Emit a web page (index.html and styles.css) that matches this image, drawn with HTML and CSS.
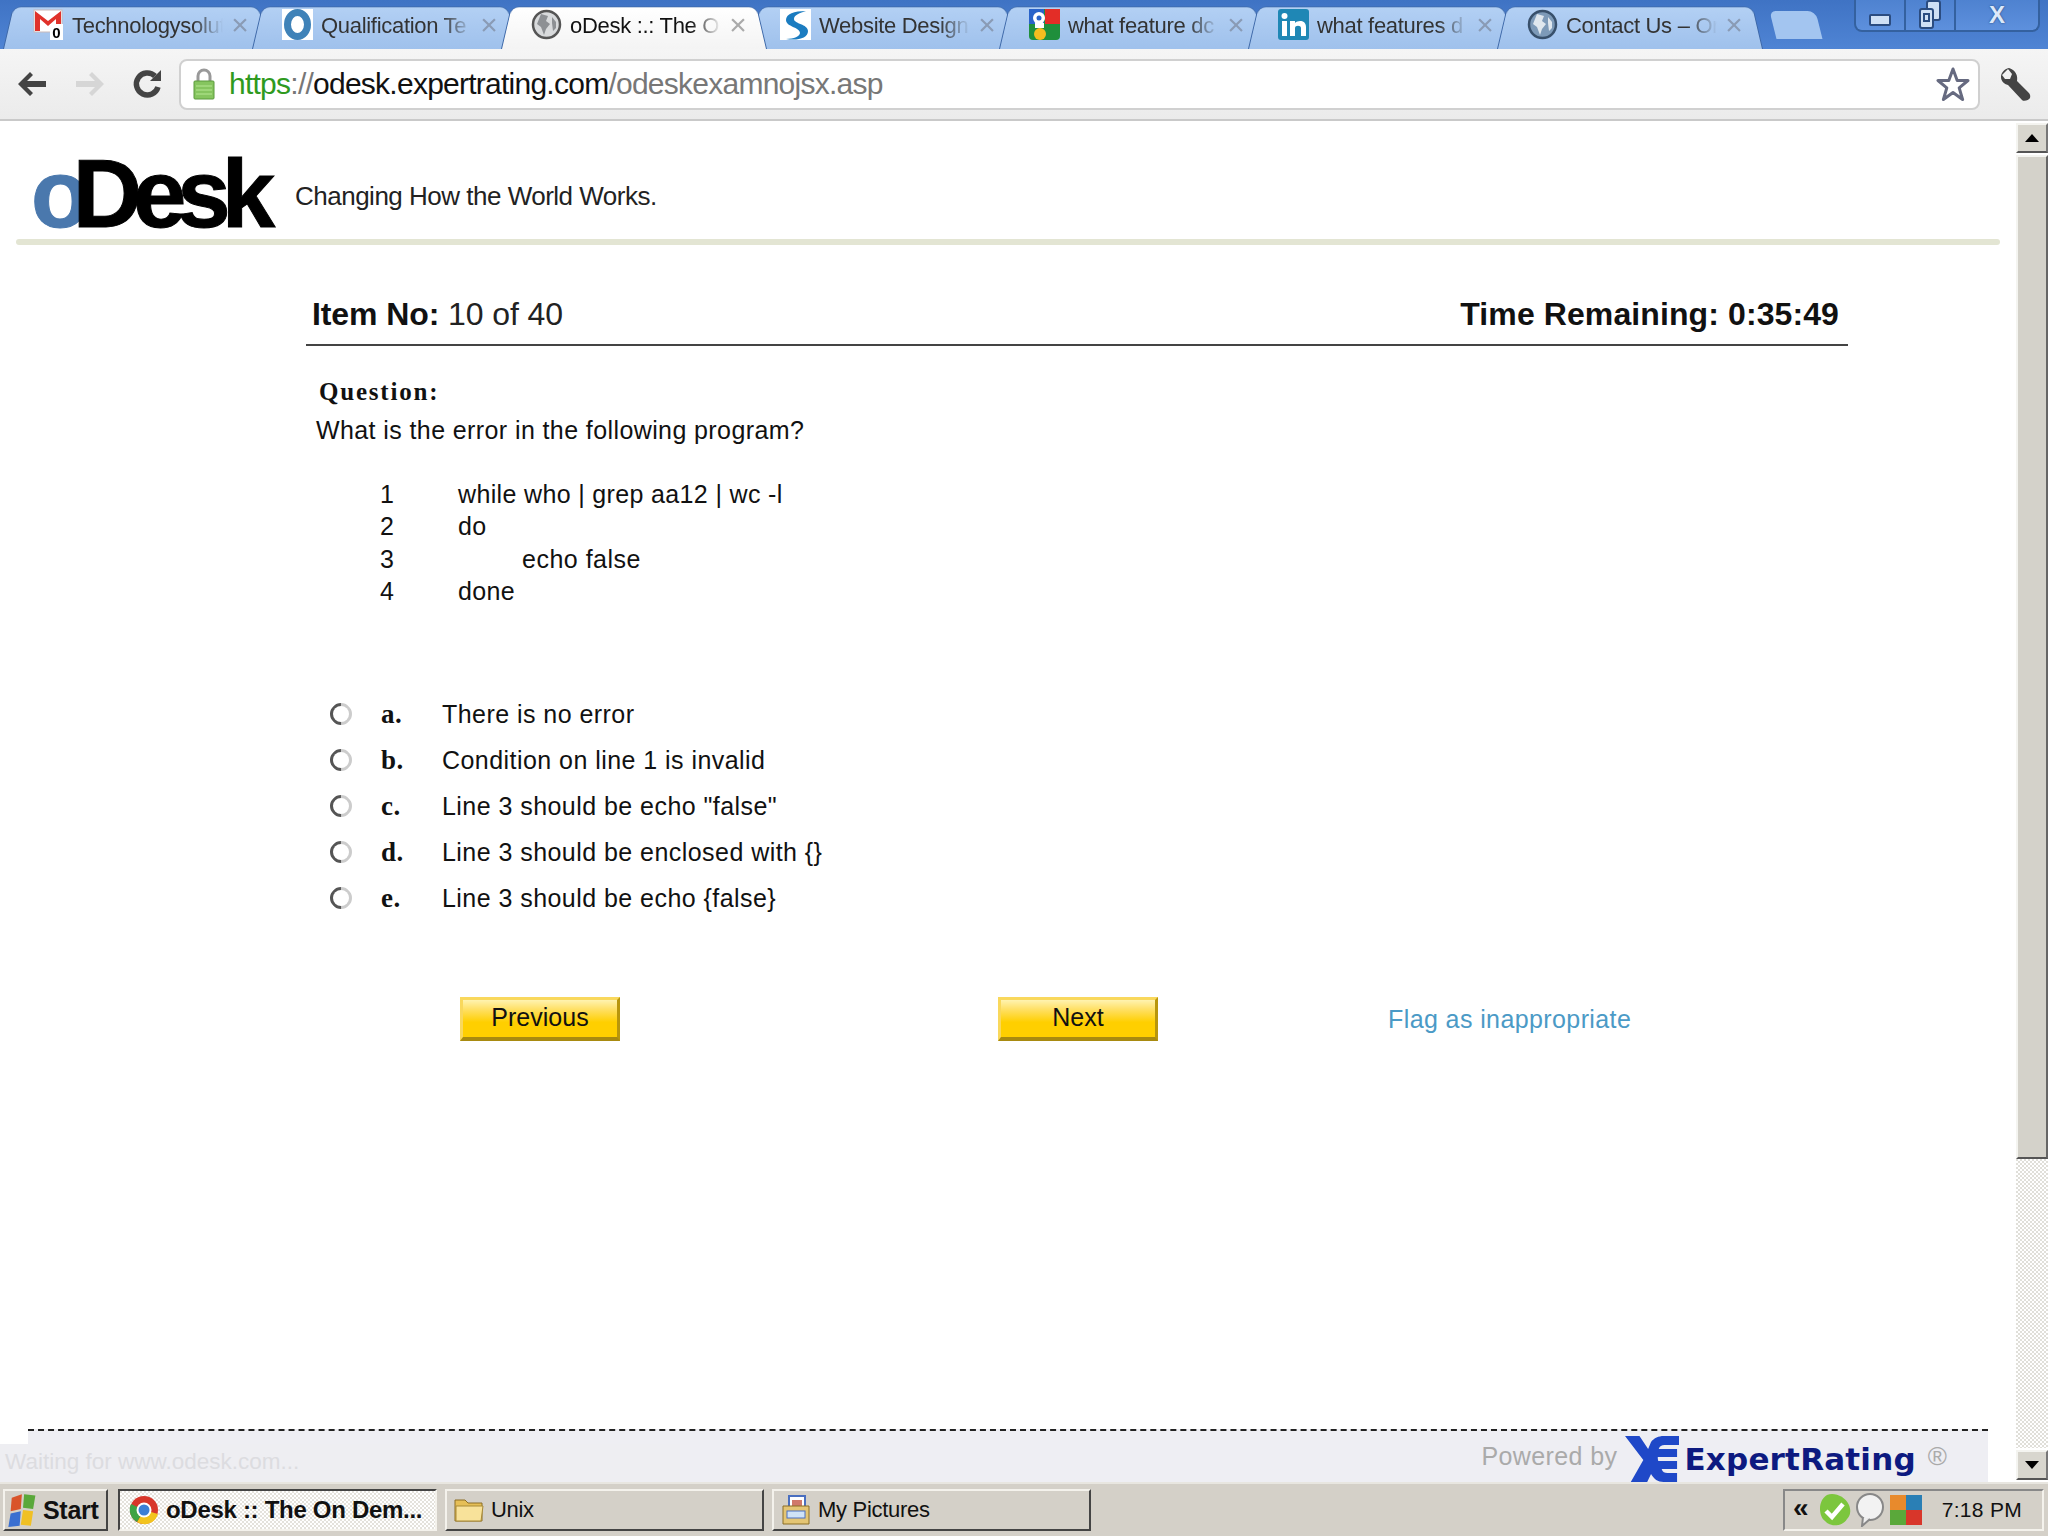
FILE: index.html
```html
<!DOCTYPE html>
<html lang="en">
<head>
<meta charset="utf-8">
<title>oDesk :: The On Demand Global Workforce</title>
<link rel="stylesheet" href="styles.css">
</head>
<body>
<div class="screen">
  <header class="tabstrip">
    <div class="tabs">
      <div class="tab">
        <svg class="favicon" viewBox="0 0 31 31"><rect x="1" y="1" width="28" height="22" fill="#fff" stroke="#c9b9b9"/><path d="M2 2v20h5V10l8 7 8-7v12h5V2l-13 10z" fill="#e0312a"/><rect x="17" y="15" width="13" height="16" fill="#fff"/><text x="23.5" y="29" class="badge">0</text></svg>
        <span class="tab-title">Technologysolut</span><span class="tab-close">×</span>
      </div>
      <div class="tab">
        <svg class="favicon" viewBox="0 0 31 31"><rect width="31" height="31" fill="#fff"/><ellipse cx="15.5" cy="15.5" rx="10" ry="12" fill="none" stroke="#3f82b8" stroke-width="7"/></svg>
        <span class="tab-title">Qualification Te</span><span class="tab-close">×</span>
      </div>
      <div class="tab tab-active">
        <svg class="favicon" viewBox="0 0 31 31"><circle cx="15.5" cy="15.5" r="13.5" fill="#d8dadc" stroke="#555" stroke-width="2.5"/><path d="M10 5l7 2-2 5 4 3-4 5-2 6-3-8-4-3 2-5zM21 8l4 5v6l-3 3-1-8z" fill="#8d9094"/></svg>
        <span class="tab-title">oDesk :.: The O</span><span class="tab-close">×</span>
      </div>
      <div class="tab">
        <svg class="favicon" viewBox="0 0 31 31"><rect width="31" height="31" fill="#fff"/><path d="M26 2C14 2 6 5 6 11c0 7 14 7 14 13 0 3-6 6-14 6 12 2 22-1 22-8 0-7-14-7-14-12 0-4 6-6 12-8z" fill="#1b7cc0"/></svg>
        <span class="tab-title">Website Design,</span><span class="tab-close">×</span>
      </div>
      <div class="tab">
        <svg class="favicon" viewBox="0 0 31 31"><rect width="31" height="31" rx="4" fill="#1f8f3c"/><rect x="16" width="15" height="15" fill="#e32d27"/><rect width="15" height="15" fill="#2a63c9"/><circle cx="11" cy="25" r="6" fill="#f5bd1f"/><circle cx="10" cy="9" r="6" fill="#fff"/><circle cx="10" cy="9" r="2.5" fill="#2a63c9"/><rect x="6" y="14" width="9" height="5" fill="#fff"/></svg>
        <span class="tab-title">what feature dc</span><span class="tab-close">×</span>
      </div>
      <div class="tab">
        <svg class="favicon" viewBox="0 0 31 31"><rect width="31" height="31" rx="3" fill="#1f87b5"/><rect x="4" y="12" width="5" height="15" fill="#fff"/><circle cx="6.500" cy="7" r="3" fill="#fff"/><path d="M12 12h5v2c3-3 11-3 11 4v9h-5v-8c0-3-6-3-6 0v8h-5z" fill="#fff"/></svg>
        <span class="tab-title">what features d</span><span class="tab-close">×</span>
      </div>
      <div class="tab">
        <svg class="favicon" viewBox="0 0 31 31"><circle cx="15.5" cy="15.5" r="13.500" fill="#7d9ab8" stroke="#38506b" stroke-width="2.500"/><path d="M10 5l7 2-2 5 4 3-4 5-2 6-3-8-4-3 2-5zM21 8l4 5v6l-3 3-1-8z" fill="#dfe7ee"/></svg>
        <span class="tab-title">Contact Us – Or</span><span class="tab-close">×</span>
      </div>
      <div class="tab-new"></div>
    </div>
    <div class="winctl">
      <div class="winbtn winbtn-min"><span class="min-glyph"></span></div>
      <div class="winbtn winbtn-res">
        <svg class="res-glyph" viewBox="0 0 24 30"><rect x="9" y="1" width="13" height="19" rx="2" fill="#cfe0f5" stroke="#2b4c80" stroke-width="2"/><rect x="2" y="9" width="13" height="19" rx="2" fill="#cfe0f5" stroke="#2b4c80" stroke-width="2"/><rect x="6" y="14" width="5" height="7" fill="none" stroke="#2b4c80" stroke-width="2"/></svg>
      </div>
      <div class="winbtn winbtn-close">X</div>
    </div>
  </header>

  <nav class="toolbar">
    <svg class="nav-ico" viewBox="0 0 32 32"><path d="M2 16L14 4l3 3-6 6h19v6H11l6 6-3 3z" fill="#444"/></svg>
    <svg class="nav-ico" viewBox="0 0 32 32"><path d="M30 16L18 4l-3 3 6 6H2v6h19l-6 6 3 3z" fill="#d6d6d6"/></svg>
    <svg class="nav-ico" viewBox="0 0 32 32"><path d="M26 19a11 11 0 1 1-3-11" fill="none" stroke="#444" stroke-width="5.500"/><path d="M18 13h11V2z" fill="#444"/></svg>
    <div class="omnibox">
      <svg class="lock" viewBox="0 0 22 32"><path d="M5 14V8a6 6 0 0 1 12 0v6" fill="none" stroke="#999" stroke-width="3"/><rect x="1" y="13" width="20" height="18" rx="1" fill="#86c55f" stroke="#5a9a3c"/><path d="M3 18h16M3 22h16M3 26h16" stroke="#a7dc83" stroke-width="1.500"/></svg>
      <span class="url"><span class="url-scheme">https</span><span class="url-path">://</span><span class="url-host">odesk.expertrating.com</span><span class="url-path">/odeskexamnojsx.asp</span></span>
      <svg class="star" viewBox="0 0 34 36"><path d="M17 3l4.200 11.500H32l-8.800 7.300 3.400 11.700L17 26.500 7.400 33.500l3.400-11.700L2 14.500h10.800z" fill="#fff" stroke="#666a80" stroke-width="3" stroke-linejoin="round"/></svg>
    </div>
    <svg class="wrench" viewBox="0 0 34 36"><path d="M11 2c-5 1-8 5-8 9 0 4 3 7 7 8l14 15c2 2 7 0 8-2 1-3-1-5-2-6L19 15c1-5-1-11-8-13l-1 1 4 5-2 5-5 0-3-4" fill="#444"/></svg>
  </nav>

  <main class="viewport">
    <div class="page">
      <div class="brand">
        <div class="logo"><span class="logo-o">o</span><span class="logo-desk">Desk</span></div>
        <div class="tagline">Changing How the World Works.</div>
      </div>
      <div class="brand-rule"></div>

      <div class="exam">
        <div class="exam-head">
          <div class="item-no"><b>Item No:</b> 10 of 40</div>
          <div class="timer">Time Remaining: 0:35:49</div>
        </div>
        <div class="q-label">Question:</div>
        <div class="q-text">What is the error in the following program?</div>
        <div class="code">
          <div class="code-line"><span class="ln">1</span><span>while who | grep aa12 | wc -l</span></div>
          <div class="code-line"><span class="ln">2</span><span>do</span></div>
          <div class="code-line"><span class="ln">3</span><span class="indent">echo false</span></div>
          <div class="code-line"><span class="ln">4</span><span>done</span></div>
        </div>
        <div class="options">
          <div class="option"><span class="radio"></span><b class="opt-key">a.</b><span>There is no error</span></div>
          <div class="option"><span class="radio"></span><b class="opt-key">b.</b><span>Condition on line 1 is invalid</span></div>
          <div class="option"><span class="radio"></span><b class="opt-key">c.</b><span>Line 3 should be echo "false"</span></div>
          <div class="option"><span class="radio"></span><b class="opt-key">d.</b><span>Line 3 should be enclosed with {}</span></div>
          <div class="option"><span class="radio"></span><b class="opt-key">e.</b><span>Line 3 should be echo {false}</span></div>
        </div>
        <div class="actions">
          <button class="btn">Previous</button>
          <button class="btn btn-next">Next</button>
          <a class="flag">Flag as inappropriate</a>
        </div>
      </div>

      <footer class="foot">
        <span class="powered">Powered by</span>
        <svg class="er-mark" viewBox="0 0 56 46" preserveAspectRatio="none"><path d="M0 0h15l9 13 3-7c3-4 8-6 13-6h16v9H41c-3 0-5 1-6 4h19v8H34c0 2 0 2 .500 4H54v8H38c1 3 3 4 6 4h10v9H40c-6 0-10-3-13-8l-4 8H6l13-22z" fill="#1f48c8"/></svg>
        <span class="er-name">ExpertRating</span>
        <span class="er-reg">®</span>
      </footer>
      <div class="status-bubble">Waiting for www.odesk.com...</div>
    </div>
    <div class="scrollbar">
      <div class="sb-btn"><span class="arr-up"></span></div>
      <div class="sb-thumb"></div>
      <div class="sb-track"></div>
      <div class="sb-btn"><span class="arr-down"></span></div>
    </div>
  </main>

  <div class="taskbar">
    <div class="task task-start">
      <svg class="flag-ico" viewBox="0 0 28 32"><path d="M4 5l9-3-1 13-9 2z" fill="#d9542a"/><path d="M15 2l10 1-2 12-9-1z" fill="#5aa83a"/><path d="M3 19l9-2-1 13-10 1z" fill="#3b6fd0"/><path d="M14 16l9 1-2 13-9-1z" fill="#f0c024"/></svg>
      <b>Start</b>
    </div>
    <div class="task task-active">
      <svg class="task-ico" viewBox="0 0 30 32"><circle cx="15" cy="16" r="14" fill="#d8362a"/><path d="M15 16L29 20A14 14 0 0 1 8 28z" fill="#f2c31e"/><path d="M15 16L8 28A14 14 0 0 1 2 10z" fill="#3ea345"/><circle cx="15" cy="16" r="7.500" fill="#fff"/><circle cx="15" cy="16" r="5.500" fill="#3c7fd6"/></svg>
      <b>oDesk :: The On Dem...</b>
    </div>
    <div class="task">
      <svg class="task-ico" viewBox="0 0 32 32"><path d="M2 6h10l3 3h14v18H2z" fill="#e6bf57" stroke="#8c6f26"/><path d="M3 12h27l-2 15H3z" fill="#f8e29a" stroke="#a98a36"/></svg>
      <span>Unix</span>
    </div>
    <div class="task">
      <svg class="task-ico" viewBox="0 0 32 32"><rect x="9" y="2" width="16" height="18" fill="#fff" stroke="#4a6fc0" stroke-width="2"/><rect x="12" y="6" width="10" height="10" fill="#d0786a"/><path d="M3 12h26v18H3z" fill="#e4c574" stroke="#8c6f26"/><rect x="7" y="17" width="18" height="7" fill="#cfe2f6" stroke="#4a6fc0"/></svg>
      <span>My Pictures</span>
    </div>
    <div class="tray">
      <b class="tray-chev">«</b>
      <svg class="tray-ico" viewBox="0 0 34 34"><path d="M10 2c7-3 18 1 22 10 3 8 0 12-2 14-4 7-16 9-22 2C2 24 0 8 10 2z" fill="#7cc63d"/><path d="M9 18l6 6 11-13" fill="none" stroke="#fff" stroke-width="4.500"/></svg>
      <svg class="tray-ico" viewBox="0 0 34 34"><circle cx="17" cy="14" r="13" fill="#f2f2f2" stroke="#888" stroke-width="2"/><path d="M10 24l-1 9 8-7" fill="#eee" stroke="#888" stroke-width="2"/></svg>
      <svg class="tray-ico" viewBox="0 0 34 34"><rect x="1" y="2" width="16" height="15" fill="#e88a2c"/><rect x="17" y="2" width="16" height="15" fill="#2a7fb5"/><rect x="1" y="17" width="16" height="15" fill="#5aa83a"/><rect x="17" y="17" width="16" height="15" fill="#d8362a"/></svg>
      <span class="clock">7:18 PM</span>
    </div>
  </div>
</div>
</body>
</html>
```

FILE: styles.css
```css
* { box-sizing: border-box; }
html, body { margin: 0; padding: 0; }
body { font-family: "Liberation Sans", Arial, sans-serif; color: #111; background: #fff; }
.screen { width: 2048px; height: 1536px; display: flex; flex-direction: column; overflow: hidden; }

/* Tab strip */
.tabstrip { height: 49px; flex: none; display: flex; justify-content: space-between; background: linear-gradient(#3f73c4, #4f84d4); overflow: hidden; }
.tabs { display: flex; padding: 2px 0 0 3px; }
.tab { position: relative; width: 266px; height: 47px; margin-right: -17px; padding: 7px 0 0 30px; display: flex; align-items: flex-start; font-size: 22px; color: #333; }
.tab::before { content: ""; position: absolute; inset: 0; background: linear-gradient(#b3d0f4, #9fc1ec); border: 1px solid #3d68a8; border-bottom: 0; border-radius: 9px 9px 0 0; transform: perspective(120px) rotateX(12deg); transform-origin: bottom; }
.tab-active { z-index: 2; color: #111; }
.tab-active::before { background: linear-gradient(#fff, #f4f4f4); }
.tab > * { position: relative; }
.favicon { width: 31px; height: 31px; flex: none; }
.badge { font: bold 15px "Liberation Sans", sans-serif; text-anchor: middle; fill: #000; }
.tab-title { width: 151px; margin-left: 8px; line-height: 34px; white-space: nowrap; letter-spacing: -.3px; -webkit-mask-image: linear-gradient(90deg, #000 80%, transparent); mask-image: linear-gradient(90deg, #000 80%, transparent); }
.tab-close { margin-left: 7px; width: 20px; text-align: center; line-height: 32px; font-size: 30px; color: #8a9bb5; }
.tab-active .tab-close { color: #aaa; }
.tab-new { width: 46px; height: 28px; margin: 9px 0 0 27px; background: #a3c5f0; border-radius: 6px 8px 0 0; transform: skewX(14deg); }
.winctl { display: flex; height: 32px; margin-right: 8px; border: 2px solid #34619f; border-top: 0; border-radius: 0 0 8px 8px; background: linear-gradient(#4e82d0, #5d90dd); }
.winbtn { display: flex; align-items: center; justify-content: center; border-right: 2px solid #34619f; }
.winbtn-min { width: 50px; }
.winbtn-res { width: 50px; }
.winbtn-close { width: 82px; border-right: 0; color: #dce9fa; font: bold 24px/28px "Liberation Sans", sans-serif; text-shadow: 0 0 2px #1d3c6e; }
.min-glyph { width: 22px; height: 12px; background: #cfe0f5; border: 2px solid #2b4c80; border-radius: 2px; margin-top: 10px; }
.res-glyph { width: 24px; height: 30px; }

/* Toolbar */
.toolbar { height: 72px; flex: none; display: flex; align-items: center; padding: 0 16px 0 16px; background: linear-gradient(#f5f5f5, #ebebeb); border-bottom: 2px solid #c9c9c9; }
.nav-ico { width: 32px; height: 32px; margin-right: 26px; flex: none; }
.omnibox { flex: 1; height: 51px; margin-left: -11px; padding: 0 8px 0 12px; display: flex; align-items: center; background: #fff; border: 2px solid #d0d0d0; border-radius: 8px; }
.lock { width: 22px; height: 32px; flex: none; margin-right: 14px; }
.url { flex: 1; font-size: 30px; letter-spacing: -.75px; white-space: nowrap; }
.url-scheme { color: #2f9a1e; }
.url-path { color: #777; }
.url-host { color: #111; }
.star { width: 34px; height: 36px; flex: none; }
.wrench { width: 34px; height: 36px; flex: none; margin-left: 18px; }

/* Viewport */
.viewport { flex: 1; min-height: 0; display: flex; }
.page { position: relative; flex: 1; display: flex; flex-direction: column; padding-top: 33px; }
.brand { height: 85px; display: flex; align-items: center; padding-left: 31px; }
.logo { width: 264px; margin-top: -6px; font-weight: bold; font-size: 96px; line-height: 84px; white-space: nowrap; -webkit-text-stroke: 1px #000; }
.logo-o { color: #4a78ad; letter-spacing: -10px; -webkit-text-stroke: 1px #4a78ad; }
.logo-desk { color: #000; margin-left: -7px; letter-spacing: -9px; }
.tagline { font-size: 26px; color: #222; letter-spacing: -.5px; }
.brand-rule { height: 6px; margin: 0 16px; background: #e3e5d3; border-radius: 3px; }

.exam { width: 1542px; margin: 46px 0 0 306px; }
.exam-head { height: 55px; display: flex; justify-content: space-between; align-items: center; padding: 0 9px 7px 6px; border-bottom: 2px solid #444; font-size: 32px; color: #222; letter-spacing: -.1px; }
.item-no b, .timer { font-weight: bold; color: #111; }
.timer { letter-spacing: .1px; }
.q-label { margin: 30px 0 0 13px; height: 32px; font: bold 25px/32px "Liberation Serif", serif; letter-spacing: 1.8px; }
.q-text { margin: 6px 0 0 10px; font-size: 25px; line-height: 32px; letter-spacing: .4px; }
.code { margin: 32px 0 0 74px; font-size: 25px; }
.code-line { display: flex; height: 32.3px; line-height: 32px; letter-spacing: .35px; }
.ln { width: 78px; }
.indent { margin-left: 64px; letter-spacing: .5px; }
.options { margin: 84px 0 0 24px; font-size: 25px; }
.option { display: flex; align-items: center; height: 46px; letter-spacing: .45px; }
.radio { width: 22px; height: 22px; border-radius: 50%; border: 3px solid #555; border-right-color: #ccc; border-bottom-color: #ccc; transform: rotate(-45deg); margin-right: 29px; flex: none; }
.opt-key { width: 61px; font: bold 27px "Liberation Serif", serif; }
.actions { margin-top: 76px; display: flex; align-items: center; padding-left: 154px; }
.btn { width: 160px; height: 44px; padding: 0 0 3px; font: 25px "Liberation Sans", sans-serif; color: #111; background: linear-gradient(#fff3b0 0, #ffe066 25%, #ffcf00 60%, #ffcf00); border: 0; border-top: 3px solid #f9d85c; border-left: 3px solid #f9d85c; border-right: 3px solid #b8960c; border-bottom: 4px solid #a88a10; cursor: pointer; }
.btn-next { margin-left: 378px; }
.flag { margin: 0 0 0 230px; font-size: 25px; color: #4b9ac6; letter-spacing: .4px; }

.foot { margin: auto 28px 0; height: 53px; display: flex; align-items: center; justify-content: flex-end; padding-right: 41px; background: #eeeef3; border-top: 2px dashed #222; }
.powered { font-size: 25px; color: #aaa; letter-spacing: .4px; margin-right: 8px; }
.er-mark { width: 54px; height: 46px; margin-top: 4px; flex: none; }
.er-name { margin: 4px 0 0 5px; font: bold 31px "DejaVu Sans", sans-serif; color: #0d1a80; letter-spacing: .2px; }
.er-reg { margin-left: 12px; font-size: 26px; color: #aaa; }
.status-bubble { position: absolute; left: 0; bottom: 0; width: 680px; height: 38px; padding: 5px 0 0 5px; background: #eeeef2; font-size: 22.500px; color: #dcdce0; }

/* Scrollbar */
.scrollbar { width: 32px; flex: none; display: flex; flex-direction: column; background: #fff; }
.sb-btn { height: 30px; margin: 2px 0; display: flex; align-items: center; justify-content: center; background: #d8d6ce; border: 2px solid; border-color: #f4f4f0 #777 #555 #f4f4f0; flex: none; }
.arr-up { border: 7px solid transparent; border-top: 0; border-bottom: 8px solid #000; }
.arr-down { border: 7px solid transparent; border-bottom: 0; border-top: 8px solid #000; }
.sb-thumb { height: 1004px; background: #d4d2ca; border: 2px solid; border-color: #f4f4f0 #666 #555 #f4f4f0; flex: none; }
.sb-track { flex: 1; background: repeating-conic-gradient(#fff 0 25%, #e0dfd9 0 50%) 0 0 / 4px 4px; }

/* Taskbar */
.taskbar { height: 54px; flex: none; display: flex; align-items: center; padding: 0 4px 0 3px; gap: 8px; background: #d4d0c8; border-top: 2px solid #e8e6e0; font-size: 22px; color: #111; }
.task { width: 319px; height: 42px; display: flex; align-items: center; padding-left: 6px; background: #d4d0c8; border: 2px solid; border-color: #f4f2ec #444 #444 #f4f2ec; letter-spacing: -.3px; }
.task-start { width: 105px; padding-left: 2px; font-size: 25px; margin-right: 2px; }
.task-active { background: repeating-conic-gradient(#fff 0 25%, #e4e2dc 0 50%) 0 0 / 4px 4px; border-color: #444 #f4f2ec #f4f2ec #444; font-size: 24px; padding-left: 8px; }
.flag-ico { width: 32px; height: 36px; margin-right: 4px; flex: none; }
.task-ico { width: 32px; height: 32px; margin-right: 6px; flex: none; }
.tray { margin-left: auto; width: 261px; height: 42px; display: flex; align-items: center; padding: 0 20px 0 8px; border: 2px solid; border-color: #888 #f4f2ec #f4f2ec #888; }
.tray-chev { width: 24px; font-size: 28px; line-height: 1; padding-bottom: 4px; }
.tray-ico { width: 34px; height: 34px; margin-right: 2px; flex: none; }
.clock { margin-left: auto; font-size: 21px; letter-spacing: .3px; }
```
